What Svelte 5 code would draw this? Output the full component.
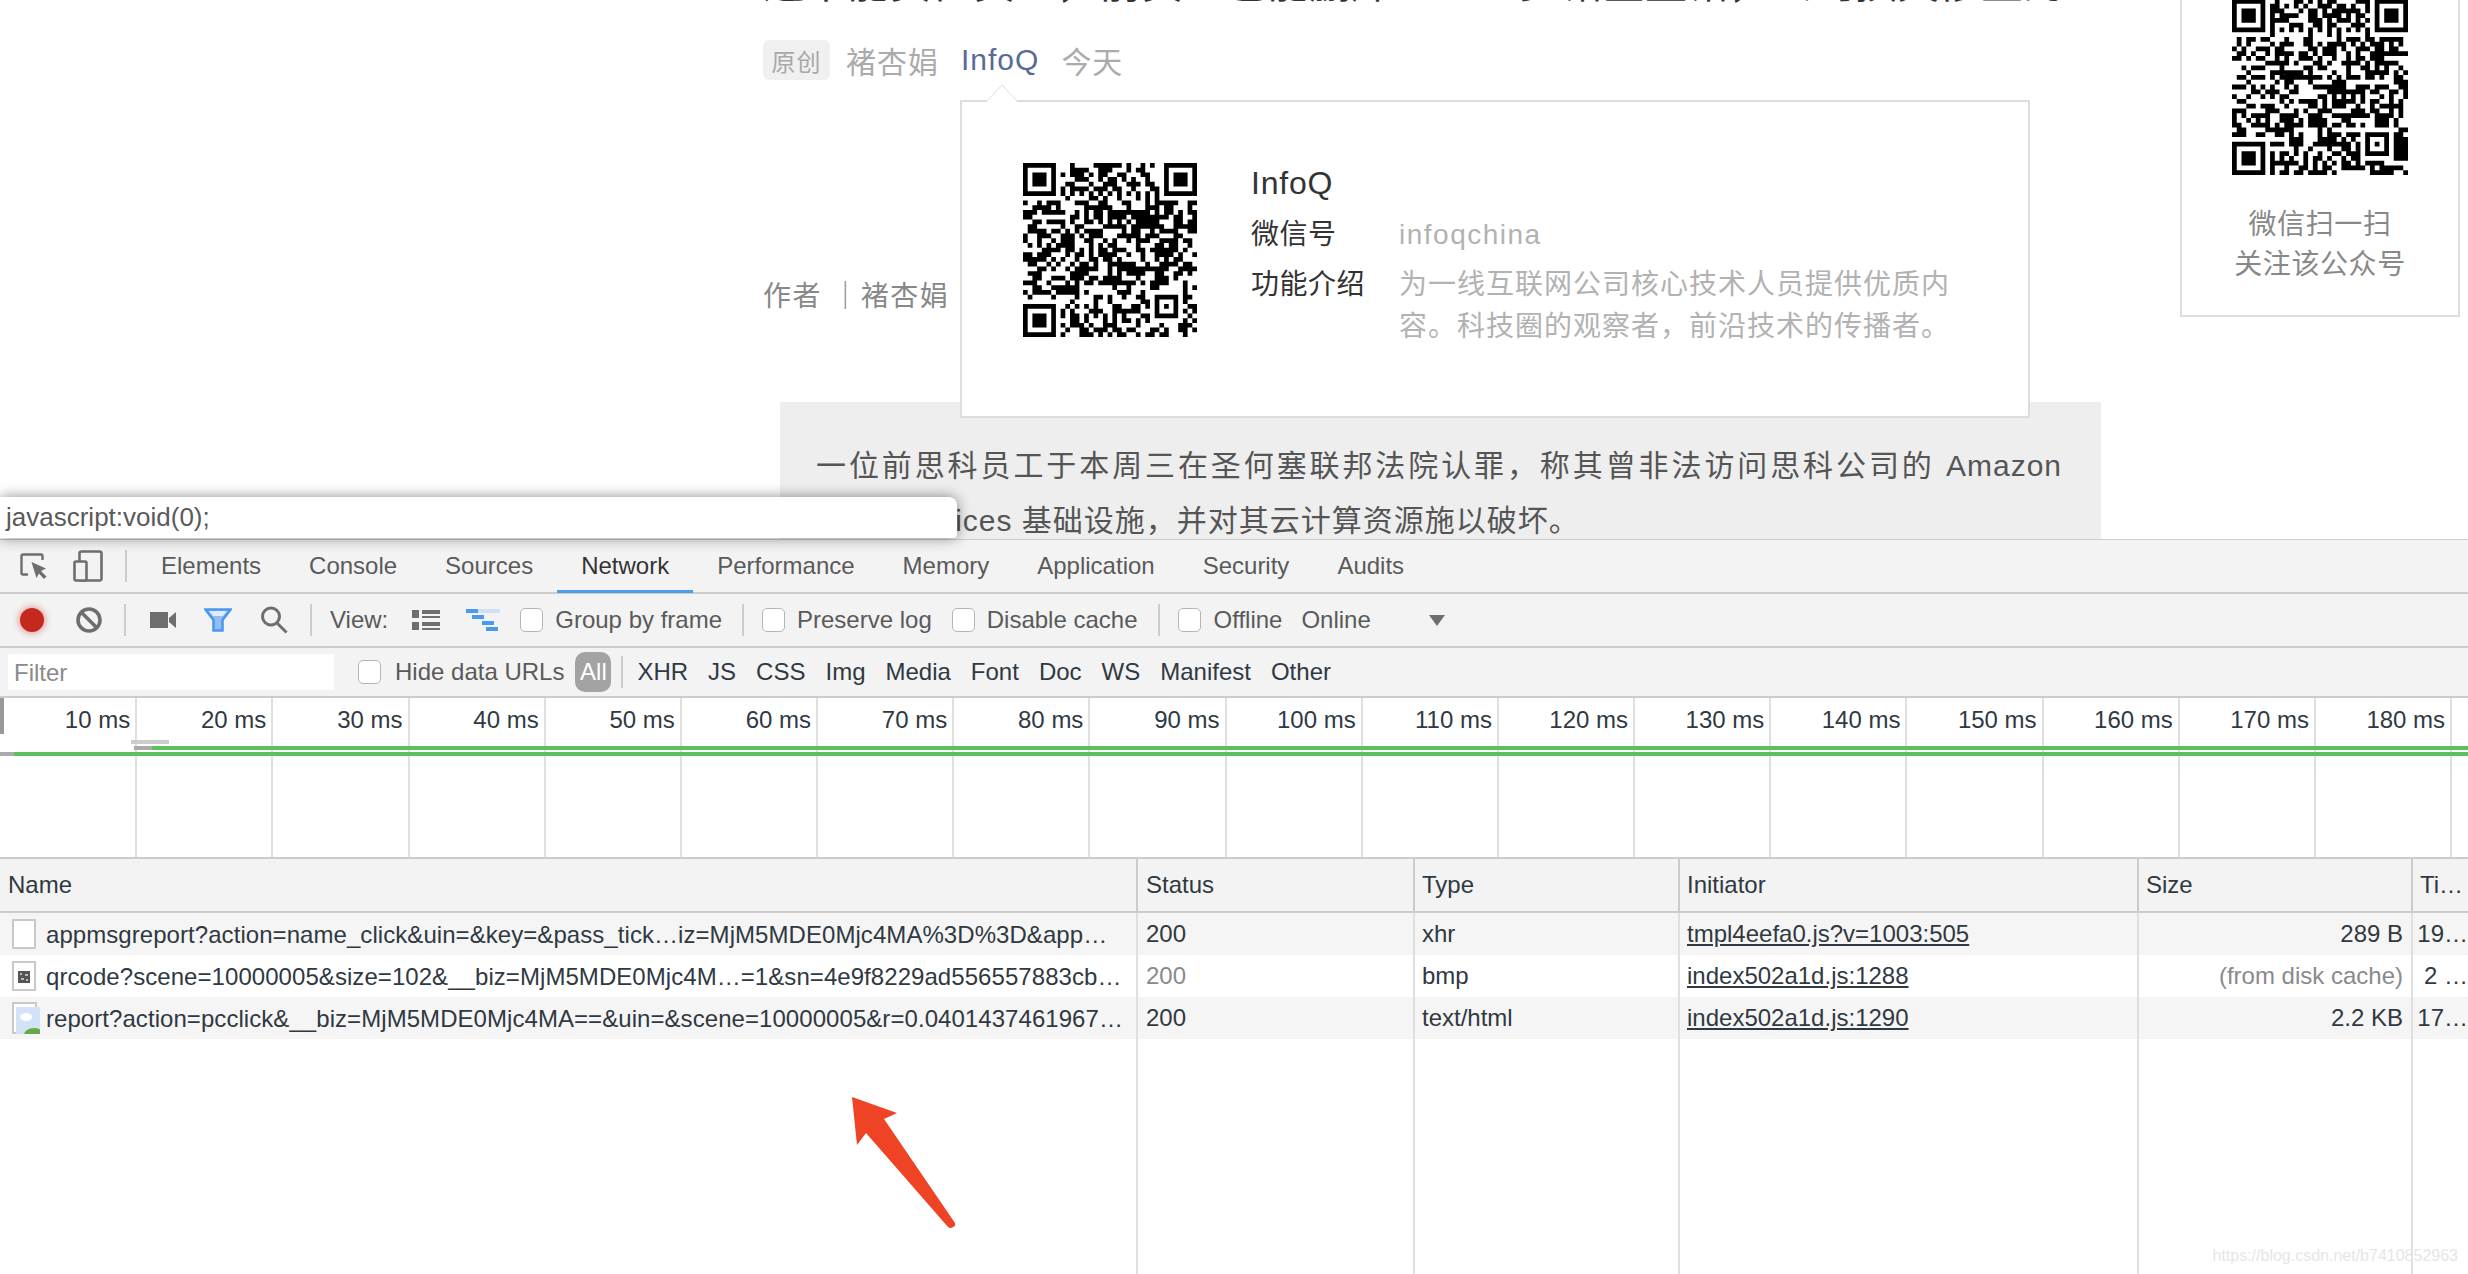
<script lang="ts">
	const TABS = ['Elements', 'Console', 'Sources', 'Network', 'Performance', 'Memory', 'Application', 'Security', 'Audits'];
	const FILTERS = ['XHR', 'JS', 'CSS', 'Img', 'Media', 'Font', 'Doc', 'WS', 'Manifest', 'Other'];
	const TICKS = Array.from({ length: 18 }, (_, i) => `${(i + 1) * 10} ms`);

	const ROWS = [
		{
			icon: 'doc',
			name: 'appmsgreport?action=name_click&uin=&key=&pass_tick…iz=MjM5MDE0Mjc4MA%3D%3D&app…',
			status: '200',
			type: 'xhr',
			initiator: 'tmpl4eefa0.js?v=1003:505',
			size: '289 B',
			time: '19…'
		},
		{
			icon: 'qr',
			name: 'qrcode?scene=10000005&size=102&__biz=MjM5MDE0Mjc4M…=1&sn=4e9f8229ad556557883cb…',
			status: '200',
			type: 'bmp',
			initiator: 'index502a1d.js:1288',
			size: '(from disk cache)',
			time: '2 …',
			cached: true
		},
		{
			icon: 'img',
			name: 'report?action=pcclick&__biz=MjM5MDE0Mjc4MA==&uin=&scene=10000005&r=0.0401437461967…',
			status: '200',
			type: 'text/html',
			initiator: 'index502a1d.js:1290',
			size: '2.2 KB',
			time: '17…'
		}
	];

	// fake but plausible qr matrix, same seed gives the same picture
	function qrPath(seed: number): string {
		const n = 37;
		let s = seed;
		const rand = () => {
			s = (s + 0x6d2b79f5) | 0;
			let t = Math.imul(s ^ (s >>> 15), 1 | s);
			t = (t + Math.imul(t ^ (t >>> 7), 61 | t)) ^ t;
			return ((t ^ (t >>> 14)) >>> 0) / 4294967296;
		};
		const cells: boolean[][] = [];
		for (let y = 0; y < n; y++) {
			cells.push([]);
			for (let x = 0; x < n; x++) cells[y].push(rand() > 0.47);
		}
		const box = (ox: number, oy: number, size: number) => {
			const half = (size - 1) / 2;
			for (let y = -1; y <= size; y++) {
				for (let x = -1; x <= size; x++) {
					const cx = ox + x;
					const cy = oy + y;
					if (cx < 0 || cy < 0 || cx >= n || cy >= n) continue;
					const ring = Math.max(Math.abs(x - half), Math.abs(y - half));
					cells[cy][cx] = size === 7 ? ring !== 2 && ring !== 4 : ring !== 1 && ring !== 3;
				}
			}
		};
		box(0, 0, 7);
		box(30, 0, 7);
		box(0, 30, 7);
		box(28, 28, 5);
		for (let i = 8; i < 29; i++) {
			cells[6][i] = i % 2 === 0;
			cells[i][6] = i % 2 === 0;
		}
		let d = '';
		cells.forEach((row, y) =>
			row.forEach((on, x) => {
				if (on) d += `M${x} ${y}h1v1h-1z`;
			})
		);
		return d;
	}

	const qrSmall = qrPath(20190);
	const qrSide = qrPath(7741);
</script>

{#snippet checkbox()}
	<span class="check"></span>
{/snippet}

<div class="app">
	<section class="page">
		<article class="article">
			<h1>这不能责怪员工，前员工也能删库——一步错全盘错，公司损失惨重的</h1>
			<div class="meta">
				<span class="tag">原创</span>
				<span class="meta-text">褚杏娟</span>
				<span class="meta-link">InfoQ</span>
				<span class="meta-text">今天</span>
			</div>
			<p class="byline">作者 ｜褚杏娟</p>
			<blockquote>
				<span class="quote-first">一位前思科员工于本周三在圣何塞联邦法院认罪，称其曾非法访问思科公司的 Amazon</span>
				<span class="quote-line">Web Services 基础设施，并对其云计算资源施以破坏。</span>
			</blockquote>
		</article>

		<div class="popover">
			<svg class="popover-tip" width="34" height="18" viewBox="0 0 34 18" aria-hidden="true">
				<path d="M1 18 L17 1 L33 18" fill="#fff" stroke="#ddd" stroke-width="1" />
			</svg>
			<svg class="qr" width="174" height="174" viewBox="0 0 37 37" aria-hidden="true"><path d={qrSmall} /></svg>
			<div class="info">
				<div class="info-name">InfoQ</div>
				<div class="info-row">
					<span class="info-key">微信号</span>
					<span class="info-val latin">infoqchina</span>
				</div>
				<div class="info-row">
					<span class="info-key">功能介绍</span>
					<span class="info-val">为一线互联网公司核心技术人员提供优质内容。科技圈的观察者，前沿技术的传播者。</span>
				</div>
			</div>
		</div>

		<aside class="side-card">
			<svg class="qr" width="176" height="176" viewBox="0 0 37 37" aria-hidden="true"><path d={qrSide} /></svg>
			<p>微信扫一扫<br />关注该公众号</p>
		</aside>
	</section>

	<section class="devtools">
		<header class="tabs">
			<svg class="ico-inspect" width="28" height="28" viewBox="0 0 28 28" aria-hidden="true">
				<path d="M22.5 7V3a1.5 1.5 0 0 0-1.5-1.5H3A1.5 1.5 0 0 0 1.5 3v17A1.5 1.5 0 0 0 3 21.5h5" fill="none" stroke="#6e6e6e" stroke-width="2.4" />
				<path d="M11.5 9 L26 15.5 L21 18 L26.500 23.500 L24 26 L19 20.500 L16.500 25 Z" fill="#6e6e6e" />
			</svg>
			<svg class="ico-device" width="30" height="32" viewBox="0 0 30 32" aria-hidden="true">
				<rect x="6.500" y="1.500" width="22" height="29" rx="2" fill="none" stroke="#6e6e6e" stroke-width="2.600" />
				<rect x="1.500" y="11.500" width="12" height="19" rx="1.500" fill="#f3f3f3" stroke="#6e6e6e" stroke-width="2.600" />
			</svg>
			<span class="sep tab-sep"></span>
			{#each TABS as tab}
				<span class="tab" class:active={tab === 'Network'}>{tab}</span>
			{/each}
		</header>

		<div class="bar bar-main">
			<span class="record"></span>
			<svg class="ico-clear" width="28" height="28" viewBox="0 0 28 28" aria-hidden="true">
				<circle cx="14" cy="14" r="11" fill="none" stroke="#6e6e6e" stroke-width="3.600" />
				<line x1="6.500" y1="6.500" x2="21.500" y2="21.500" stroke="#6e6e6e" stroke-width="3.600" />
			</svg>
			<span class="sep sep-a"></span>
			<svg class="ico-cam" width="26" height="16" viewBox="0 0 26 16" aria-hidden="true">
				<path d="M0 0h18v16H0z M19 6 L26 0 V16 L19 10z" fill="#6e6e6e" />
			</svg>
			<svg class="ico-filter" width="28" height="24" viewBox="0 0 28 24" aria-hidden="true">
				<path d="M1.500 1.500 H26.500 L18.500 12 V22.500 H9.500 V12 Z" fill="#93bdf0" stroke="#4a98f0" stroke-width="2.600" />
				<path d="M5 3 H23 L19 8 H9 Z" fill="#dfeafa" />
			</svg>
			<svg class="ico-search" width="28" height="28" viewBox="0 0 28 28" aria-hidden="true">
				<circle cx="11" cy="10.500" r="8.500" fill="none" stroke="#6e6e6e" stroke-width="3" />
				<line x1="17" y1="17" x2="26.500" y2="26.500" stroke="#6e6e6e" stroke-width="3" />
			</svg>
			<span class="sep sep-b"></span>
			<span class="label view-label">View:</span>
			<svg class="ico-list" width="29" height="20" viewBox="0 0 29 20" aria-hidden="true">
				<path d="M1 0h7v8H1z M1 12h7v8H1z M11 0h18v4H11z M11 6h18v2H11z M11 12h18v4H11z M11 18h18v2H11z" fill="#6e6e6e" />
			</svg>
			<svg class="ico-fall" width="34" height="22" viewBox="0 0 34 22" aria-hidden="true">
				<rect x="12" y="0" width="22" height="4" fill="#cfe0f5" />
				<path d="M0 0h12v4H0z M6 6h12v4H6z M16 12h12v4H16z M20 18h12v4H20z" fill="#4a9bf0" />
			</svg>
			<span class="gap-a"></span>{@render checkbox()}
			<span class="label group-label">Group by frame</span>
			<span class="sep sep-c"></span>
			{@render checkbox()}
			<span class="label preserve-label">Preserve log</span>
			{@render checkbox()}
			<span class="label disable-label">Disable cache</span>
			<span class="sep sep-d"></span>
			{@render checkbox()}
			<span class="label offline-label">Offline</span>
			<span class="label online-label">Online</span>
			<span class="caret"></span>
		</div>

		<div class="bar bar-filter">
			<span class="filter-input">Filter</span>
			{@render checkbox()}
			<span class="label hide-label">Hide data URLs</span>
			<span class="pill">All</span>
			<span class="sep sep-e"></span>
			{#each FILTERS as item}
				<span class="filter-item">{item}</span>
			{/each}
		</div>

		<div class="timeline">
			{#each TICKS as tick}
				<div class="tick">{tick}</div>
			{/each}
			<span class="handle"></span>
			<span class="bar-gray top"></span>
			<span class="bar-green one"><i></i></span>
			<span class="bar-green two"><i></i></span>
		</div>

		<div class="table">
			<div class="cols head">
				<div>Name</div>
				<div>Status</div>
				<div>Type</div>
				<div>Initiator</div>
				<div>Size</div>
				<div>Ti…</div>
			</div>
			{#each ROWS as row, i}
				<div class="cols row" class:odd={i % 2 === 0}>
					<div class="name">
						{#if row.icon === 'doc'}
							<svg width="24" height="30" viewBox="0 0 24 30" aria-hidden="true">
								<rect x="1" y="1" width="22" height="28" fill="#fff" stroke="#c8c8c8" stroke-width="2" />
							</svg>
						{:else if row.icon === 'qr'}
							<svg width="24" height="30" viewBox="0 0 24 30" aria-hidden="true">
								<rect x="1" y="1" width="22" height="28" fill="#fff" stroke="#c8c8c8" stroke-width="2" />
								<rect x="6" y="10" width="12" height="12" fill="#555" />
								<path d="M8 12h2v2H8z M13 13h3v2h-3z M9 17h3v2H9z M14 18h2v2h-2z" fill="#bbb" />
							</svg>
						{:else}
							<svg width="28" height="32" viewBox="0 0 28 32" aria-hidden="true">
								<rect x="1" y="1" width="23" height="30" fill="#fff" stroke="#c8c8c8" stroke-width="2" />
								<rect x="4" y="5" width="24" height="27" fill="#d4e2f7" />
								<ellipse cx="14" cy="15" rx="6" ry="4" fill="#fff" />
								<ellipse cx="22" cy="33" rx="10" ry="7" fill="#62ab45" />
							</svg>
						{/if}
						<span class="name-text">{row.name}</span>
					</div>
					<div class:muted={row.cached}>{row.status}</div>
					<div>{row.type}</div>
					<div class="link">{row.initiator}</div>
					<div class="right" class:muted={row.cached}>{row.size}</div>
					<div class="right time">{row.time}</div>
				</div>
			{/each}
			<div class="cols filler">
				<div></div><div></div><div></div><div></div><div></div><div></div>
			</div>
		</div>
	</section>

	<div class="status-bubble">javascript:void(0);</div>

	<svg class="red-arrow" width="110" height="140" viewBox="0 0 110 140" aria-hidden="true">
		<path d="M2 7 L47 23 L34 29 L105 133 Q106 136 103 137 Q101 139 98 137 L16 43 L7 55 Z" fill="#ee4325" />
	</svg>

	<div class="watermark">https://blog.csdn.net/b7410852963</div>
</div>

<style>
	:global(body) {
		background: #fff;
	}

	.app {
		position: relative;
		width: 2468px;
		height: 1274px;
		overflow: hidden;
		font-family: 'Liberation Sans', 'Noto Sans CJK SC', sans-serif;
	}

	.page {
		position: relative;
		height: 539px;
		overflow: hidden;
		background: #fff;
	}

	.article {
		margin-left: 763px;
		width: 1338px;
	}

	h1 {
		margin: -41px 0 0;
		height: 49px;
		font-size: 42px;
		line-height: 49px;
		font-weight: 400;
		color: #333;
		white-space: nowrap;
		overflow: hidden;
	}

	.meta {
		display: flex;
		align-items: center;
		height: 40px;
		margin-top: 32px;
		font-size: 30px;
		letter-spacing: 1px;
	}

	.tag {
		display: flex;
		align-items: center;
		justify-content: center;
		width: 67px;
		height: 40px;
		border-radius: 6px;
		background: #f0f0f0;
		color: #a8a8a8;
		font-size: 24px;
		margin-right: 16px;
	}

	.meta-text {
		color: #ababab;
	}

	.meta-link {
		color: #576b95;
		margin: 0 22px 0 22px;
	}

	.byline {
		margin: 200px 0 0;
		height: 34px;
		line-height: 34px;
		font-size: 28px;
		color: #888;
		letter-spacing: 1.500px;
	}

	blockquote {
		margin: 88px 0 0 17px;
		padding: 36px 36px 0;
		height: 137px;
		box-sizing: border-box;
		background: #eee;
		font-size: 30px;
		line-height: 55px;
		letter-spacing: 1px;
		color: #555;
	}

	.quote-first {
		display: block;
		width: 1246px;
		white-space: nowrap;
		text-align: justify;
		text-align-last: justify;
	}

	.quote-line {
		display: block;
		white-space: nowrap;
	}

	.popover {
		position: absolute;
		left: 960px;
		top: 100px;
		width: 1070px;
		height: 318px;
		box-sizing: border-box;
		display: flex;
		gap: 54px;
		padding: 61px;
		background: #fff;
		border: 2px solid #ddd;
	}

	.popover-tip {
		position: absolute;
		left: 23px;
		top: -18px;
	}

	.qr {
		flex: none;
		display: block;
	}

	.info {
		flex: 1;
		font-size: 28px;
		color: #333;
	}

	.info-name {
		height: 40px;
		line-height: 40px;
		font-size: 32px;
		letter-spacing: 0.800px;
		margin-bottom: 11px;
	}

	.info-row {
		display: flex;
		margin-bottom: 8px;
		line-height: 42px;
	}

	.info-key {
		flex: none;
		width: 148px;
		letter-spacing: 0.500px;
	}

	.info-val {
		width: 565px;
		color: #b2b2b2;
		letter-spacing: 1px;
	}

	.latin {
		letter-spacing: 1.500px;
	}

	.side-card {
		position: absolute;
		left: 2180px;
		top: -4px;
		width: 280px;
		height: 321px;
		box-sizing: border-box;
		display: flex;
		flex-direction: column;
		align-items: center;
		padding-top: 1px;
		background: #fff;
		border: 2px solid #ddd;
	}

	.side-card p {
		margin: 30px 0 0;
		font-size: 28px;
		line-height: 40px;
		letter-spacing: 0.600px;
		color: #888;
		text-align: center;
	}

	.devtools {
		display: flex;
		flex-direction: column;
		height: 735px;
		box-sizing: border-box;
		background: #f3f3f3;
		color: #5a5a5a;
		font-size: 24px;
		border-top: 1px solid #ccc;
	}

	.tabs {
		display: flex;
		align-items: center;
		height: 54px;
		flex: none;
		box-sizing: border-box;
		border-bottom: 2px solid #ccc;
	}

	.ico-inspect {
		margin-left: 20px;
		margin-top: 2px;
	}

	.ico-device {
		margin-left: 25px;
	}

	.sep {
		flex: none;
		width: 2px;
		height: 32px;
		background: #ccc;
	}

	.tab-sep {
		margin: 0 10px 0 22px;
	}

	.tab {
		display: flex;
		align-items: center;
		height: 52px;
		padding: 0 24px;
		box-sizing: border-box;
		border-bottom: 3px solid transparent;
		margin-bottom: -2px;
	}

	.tab.active {
		color: #333;
		border-bottom-color: #4a9eea;
	}

	.bar {
		display: flex;
		align-items: center;
		flex: none;
		box-sizing: border-box;
		border-bottom: 2px solid #ccc;
	}

	.bar-main {
		height: 54px;
	}

	.record {
		flex: none;
		width: 24px;
		height: 24px;
		margin-left: 20px;
		border-radius: 50%;
		background: #c5281c;
		box-shadow: 0 0 6px 2px rgba(197, 40, 28, 0.35);
	}

	.ico-clear {
		margin-left: 31px;
	}

	.sep-a {
		margin-left: 21px;
	}

	.ico-cam {
		margin-left: 24px;
	}

	.ico-filter {
		margin-left: 28px;
	}

	.ico-search {
		margin-left: 28px;
	}

	.sep-b {
		margin-left: 22px;
	}

	.view-label {
		margin-left: 18px;
	}

	.ico-list {
		margin-left: 23px;
	}

	.ico-fall {
		margin-left: 26px;
	}

	.gap-a {
		width: 20px;
		flex: none;
	}

	.check {
		flex: none;
		width: 23px;
		height: 24px;
		box-sizing: border-box;
		border: 1px solid #b5b5b5;
		border-radius: 5px;
		background: #fff;
	}

	.label {
		white-space: nowrap;
	}

	.group-label,
	.disable-label,
	.preserve-label,
	.offline-label {
		margin-left: 12px;
	}

	.sep-c {
		margin: 0 18px 0 20px;
	}

	.preserve-label {
		margin-right: 20px;
	}

	.sep-d {
		margin: 0 18px 0 21px;
	}

	.online-label {
		margin-left: 19px;
	}

	.caret {
		width: 0;
		height: 0;
		margin-left: 58px;
		border-left: 8px solid transparent;
		border-right: 8px solid transparent;
		border-top: 11px solid #6e6e6e;
	}

	.bar-filter {
		height: 50px;
		color: #303942;
	}

	.filter-input {
		flex: none;
		width: 326px;
		height: 36px;
		line-height: 37px;
		margin: 0 24px 0 8px;
		padding-left: 6px;
		box-sizing: border-box;
		background: #fff;
		color: #8a8a8a;
	}

	.hide-label {
		margin-left: 14px;
		color: #5a5a5a;
	}

	.pill {
		flex: none;
		width: 36px;
		height: 40px;
		line-height: 40px;
		margin-left: 11px;
		border-radius: 10px;
		background: #a3a3a3;
		color: #fff;
		text-align: center;
	}

	.sep-e {
		margin: 0 4px 0 10px;
	}

	.filter-item {
		padding: 0 10px;
	}

	.timeline {
		position: relative;
		display: flex;
		flex: none;
		height: 161px;
		padding-left: 1px;
		box-sizing: border-box;
		background: #fff;
		color: #303942;
		border-bottom: 2px solid #ccc;
		overflow: hidden;
	}

	.tick {
		flex: none;
		width: 136.180px;
		box-sizing: border-box;
		border-right: 2px solid #e0e0e0;
		padding: 8px 5px 0 0;
		text-align: right;
		line-height: 28px;
	}

	.handle {
		position: absolute;
		left: 0;
		top: 0;
		width: 4px;
		height: 36px;
		background: #999;
	}

	.bar-gray.top {
		position: absolute;
		left: 131px;
		top: 42px;
		width: 38px;
		height: 4px;
		background: #ccc;
	}

	.bar-green {
		position: absolute;
		right: 0;
		height: 4px;
		background: #5bc05f;
	}

	.bar-green i {
		position: absolute;
		top: 0;
		height: 4px;
		background: #aaa;
	}

	.bar-green.one {
		left: 152px;
		top: 48px;
	}

	.bar-green.one i {
		left: -18px;
		width: 18px;
	}

	.bar-green.two {
		left: 14px;
		top: 54px;
	}

	.bar-green.two i {
		left: -14px;
		width: 14px;
	}

	.table {
		display: flex;
		flex: 1;
		flex-direction: column;
		min-height: 0;
		background: #fff;
		color: #303942;
	}

	.cols {
		display: grid;
		grid-template-columns: 1136px 277px 265px 459px 274px 57px;
		flex: none;
	}

	.cols > div {
		box-sizing: border-box;
		padding-left: 7px;
		white-space: nowrap;
		overflow: hidden;
	}

	.cols > div:first-child {
		padding-left: 8px;
	}

	.cols > div:nth-child(2) {
		padding-left: 8px;
	}

	.cols > div + div {
		border-left: 2px solid #e0e0e0;
	}

	.head {
		height: 54px;
		background: #f3f3f3;
		line-height: 52px;
		border-bottom: 2px solid #ccc;
		box-sizing: border-box;
	}

	.head > div + div {
		border-left-color: #ccc;
	}

	.row {
		height: 42px;
		line-height: 41px;
	}

	.row.odd {
		background: #f5f5f5;
	}

	.name {
		display: flex;
		align-items: center;
		padding-left: 12px !important;
	}

	.name svg {
		flex: none;
		margin-right: 10px;
	}

	.name svg[width='28'] {
		margin-right: 6px;
	}

	.name-text {
		white-space: nowrap;
		letter-spacing: 0.060px;
	}

	.link {
		text-decoration: underline;
	}

	.muted {
		color: #8a8a8a;
	}

	.right {
		text-align: right;
		padding-right: 8px;
	}

	.cols > .time {
		padding: 0;
		overflow: visible;
	}

	.filler {
		flex: 1;
	}

	.status-bubble {
		position: absolute;
		left: 0;
		top: 497px;
		width: 957px;
		height: 41px;
		box-sizing: border-box;
		padding-left: 6px;
		line-height: 40px;
		font-size: 26px;
		color: #5a5a5a;
		background: #fff;
		border-radius: 0 8px 4px 0;
		box-shadow: 0 0 14px rgba(0, 0, 0, 0.45);
	}

	.red-arrow {
		position: absolute;
		left: 850px;
		top: 1090px;
	}

	.watermark {
		position: absolute;
		right: 10px;
		top: 1246px;
		font-size: 16px;
		line-height: 20px;
		color: #e6e6e6;
	}
</style>
